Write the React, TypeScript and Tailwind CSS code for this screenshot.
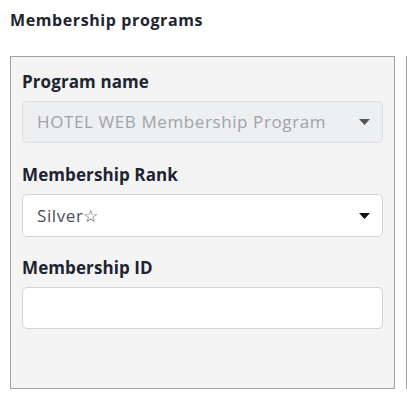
import React from "react";

function Caret({ color }: { color: string }) {
  return (
    <svg width="11" height="6" viewBox="0 0 11 6" className="shrink-0">
      <path d="M0 0 L11 0 L5.5 6 Z" fill={color} />
    </svg>
  );
}

export default function App() {
  return (
    <div
      className="w-[407px] h-[408px] bg-white overflow-hidden text-[#1e2430]"
      style={{ fontFamily: "'Open Sans', 'Noto Sans', sans-serif" }}
    >
      <div className="pl-[10px] pt-[9px] text-[16px] font-bold leading-[22px] tracking-[0.6px]">Membership programs</div>
      <div className="flex gap-[11px] mt-[25px] ml-[10px]">
        <div className="w-[385px] h-[333px] shrink-0 border border-[#a3a3a3] bg-[#f4f4f4] px-[11px] pt-[13px]">
          <div className="text-[17px] font-bold leading-[24px] tracking-[0.1px]">Program name</div>
          <div className="mt-[7px] h-[42px] rounded-[5px] border border-[#dcdde0] bg-[#eeeff1] flex items-center pl-[14px] pr-[12px]">
            <span className="flex-1 text-[17px] tracking-[0.6px] text-[#a0a3a8]">HOTEL WEB Membership Program</span>
            <Caret color="#555" />
          </div>
          <div className="mt-[20px] text-[17px] font-bold leading-[24px] tracking-[0.1px]">Membership Rank</div>
          <div className="mt-[7px] h-[43px] rounded-[5px] border border-[#d2d4d8] bg-white flex items-center pl-[14px] pr-[12px]">
            <span className="flex-1 text-[17px] tracking-[0.6px] text-[#4a4f5a]">Silver☆</span>
            <Caret color="#111" />
          </div>
          <div className="mt-[19px] text-[17px] font-bold leading-[24px] tracking-[0.1px]">Membership ID</div>
          <div className="mt-[7px] h-[42px] rounded-[5px] border border-[#d2d4d8] bg-white" />
        </div>
        <div className="w-[20px] h-[333px] shrink-0 border border-[#a3a3a3] bg-[#f4f4f4]" />
      </div>
    </div>
  );
}
